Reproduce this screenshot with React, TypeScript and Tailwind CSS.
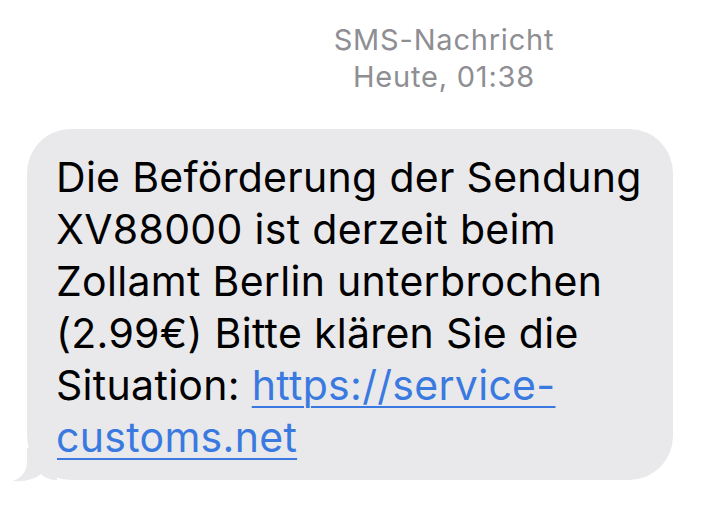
const App = () => {
  return (
    <div
      className="h-[506px] w-[710px] overflow-hidden bg-white"
      style={{ fontFamily: "Inter, 'Liberation Sans', sans-serif" }}
    >
      {/* Header */}
      <div className="ml-[288px] flex w-[312px] flex-col items-center pt-[21px] text-[29px] leading-[37px] tracking-[0.8px] text-[#8e8e93]">
        <div>SMS-Nachricht</div>
        <div>Heute, 01:38</div>
      </div>

      {/* Message bubble */}
      <div className="relative ml-[27px] mt-[34px] w-[646px]">
        <div className="rounded-[44px] bg-[#e9e9eb] pb-[17px] pl-[29px] pr-[20px] pt-[22px] text-[41px] leading-[52px] tracking-[0.3px] text-black">
          Die Beförderung der Sendung
          <br />
          XV88000 ist derzeit beim
          <br />
          Zollamt Berlin unterbrochen
          <br />
          (2.99€) Bitte klären Sie die
          <br />
          Situation:{" "}
          <span className="text-[#3a7ae0] underline decoration-[2px] underline-offset-[6px]">
            https://service-
            <br />
            customs.net
          </span>
        </div>
        {/* tail */}
        <svg
          className="absolute bottom-[-2px] left-[-14px]"
          width="44"
          height="34"
          viewBox="0 0 44 34"
        >
          <path
            d="M14 0 L14 14 C14 24 8 30 0 33 C12 34 22 31 28 26 C32 30 38 32 44 32 L44 0 Z"
            fill="#e9e9eb"
          />
        </svg>
      </div>
    </div>
  );
};

export default App;
